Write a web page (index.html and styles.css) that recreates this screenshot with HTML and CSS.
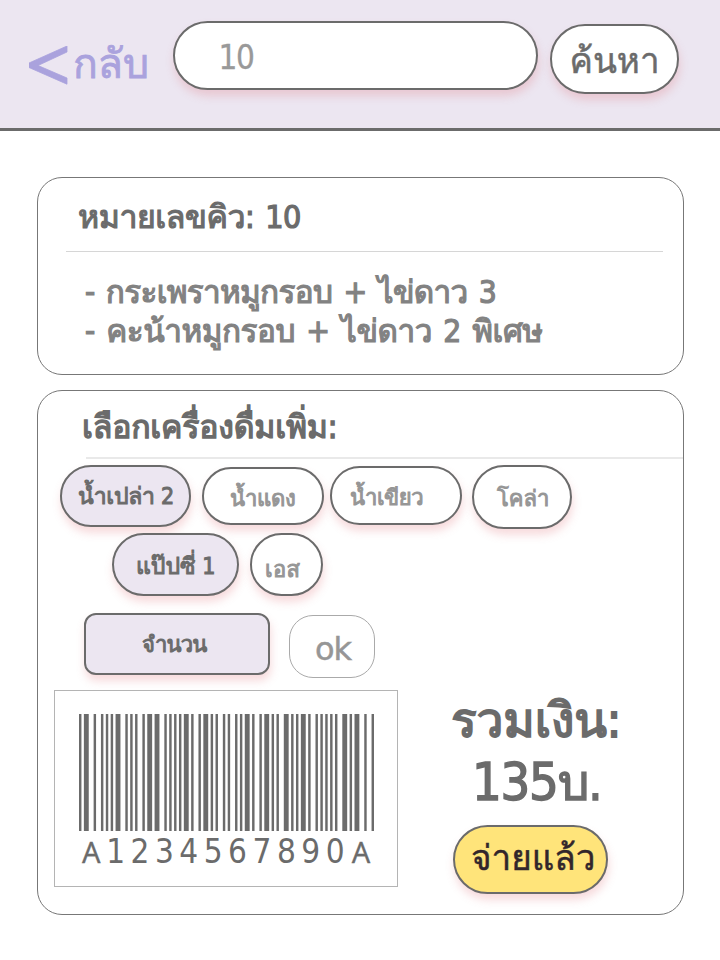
FILE: index.html
```
<!DOCTYPE html>
<html lang="th">
<head>
<meta charset="utf-8">
<title>ชำระเงิน</title>
<link rel="stylesheet" href="styles.css">
</head>
<body>
<header class="topbar">
  <a class="back"><svg class="chevron" width="39" height="39" viewBox="0 0 39 39"><path d="M38 0v6L9 19.500 38 32v6.200L0 21.500v-4.500z"/></svg><span class="t back-label">กลับ</span></a>
  <div class="search"><span class="t">10</span></div>
  <div class="find"><span class="t">ค้นหา</span></div>
</header>
<main class="content">
  <section class="card order">
    <h2 class="t order-title">หมายเลขคิว: 10</h2>
    <ul class="items">
      <li class="t item-a">- กระเพราหมูกรอบ + ไข่ดาว 3</li>
      <li class="t item-b">- คะน้าหมูกรอบ + ไข่ดาว 2 พิเศษ</li>
    </ul>
  </section>
  <section class="card drinks">
    <h2 class="t drinks-title">เลือกเครื่องดื่มเพิ่ม:</h2>
    <div class="chips">
      <div class="chip on water"><span class="t">น้ำเปล่า 2</span></div>
      <div class="chip red"><span class="t">น้ำแดง</span></div>
      <div class="chip green"><span class="t">น้ำเขียว</span></div>
      <div class="chip cola"><span class="t">โคล่า</span></div>
    </div>
    <div class="chips second">
      <div class="chip on pepsi"><span class="t">แป๊ปซี่ 1</span></div>
      <div class="chip es"><span class="t">เอส</span></div>
    </div>
    <div class="amount">
      <div class="qty"><span class="t">จำนวน</span></div>
      <div class="ok"><span class="t">ok</span></div>
    </div>
    <div class="checkout">
      <div class="barcode">
        <svg class="bars" width="295" height="117" viewBox="0 0 121 117" preserveAspectRatio="none"><path d="M0 0h1v117h-1zM2 0h2v117h-2zM6 0h1v117h-1zM9 0h1v117h-1zM11 0h1v117h-1zM13 0h1v117h-1zM15 0h2v117h-2zM19 0h1v117h-1zM21 0h1v117h-1zM23 0h1v117h-1zM26 0h1v117h-1zM28 0h2v117h-2zM31 0h2v117h-2zM35 0h1v117h-1zM37 0h1v117h-1zM39 0h1v117h-1zM41 0h1v117h-1zM43 0h2v117h-2zM46 0h1v117h-1zM49 0h1v117h-1zM51 0h2v117h-2zM54 0h1v117h-1zM56 0h1v117h-1zM59 0h1v117h-1zM61 0h1v117h-1zM64 0h1v117h-1zM66 0h1v117h-1zM68 0h2v117h-2zM71 0h1v117h-1zM74 0h1v117h-1zM76 0h2v117h-2zM79 0h1v117h-1zM81 0h1v117h-1zM84 0h2v117h-2zM87 0h1v117h-1zM89 0h1v117h-1zM91 0h2v117h-2zM94 0h1v117h-1zM97 0h1v117h-1zM99 0h1v117h-1zM101 0h1v117h-1zM103 0h1v117h-1zM105 0h1v117h-1zM108 0h2v117h-2zM111 0h1v117h-1zM113 0h2v117h-2zM117 0h1v117h-1zM120 0h1v117h-1z"/></svg>
        <div class="code"><span class="cap">A</span><span>1</span><span>2</span><span>3</span><span>4</span><span>5</span><span>6</span><span>7</span><span>8</span><span>9</span><span>0</span><span class="cap">A</span></div>
      </div>
      <div class="total">
        <div class="t sum-label">รวมเงิน:</div>
        <div class="t sum">135<span class="unit">บ.</span></div>
        <div class="paid"><span class="t">จ่ายแล้ว</span></div>
      </div>
    </div>
  </section>
</main>
</body>
</html>
```
FILE: styles.css
```
* { box-sizing: border-box; margin: 0; padding: 0; }
body { width: 720px; height: 960px; background: #fff; color: #6b6b6b; font-family: "DejaVu Sans Condensed", Tahoma, Waree, Loma, Garuda, Umpush, "Noto Sans Thai Looped", "Noto Looped Thai", FreeSans, FreeSerif, Norasi, sans-serif; overflow: hidden; }
.t { display: block; white-space: nowrap; font-weight: 400; }
.topbar { height: 131px; background: #ece6f1; border-bottom: 3px solid #6b6b6b; display: flex; align-items: flex-start; padding-left: 29px; }
.back { display: flex; width: 143.500px; padding-top: 46px; color: #aaa2dd; }
.chevron { fill: #aaa2dd; stroke: #aaa2dd; stroke-width: .8px; margin-right: 5px; flex: none; }
.back-label { font-size: 41px; line-height: 36px; -webkit-text-stroke: .8px; }
.search, .find, .paid, .chip, .qty { border: 2px solid #6b6b6b; background: #fff; box-shadow: 1px 6px 8px rgba(225, 110, 120, .25); }
.search { width: 365px; height: 69px; margin-top: 21px; border-radius: 35px; padding-left: 44px; font-size: 33px; letter-spacing: -1.500px; line-height: 70px; color: #999; -webkit-text-stroke: .3px; }
.find { width: 129px; height: 70px; margin: 24px 0 0 12px; border-radius: 35px; padding-left: 18px; font-size: 35px; line-height: 71px; -webkit-text-stroke: .5px; }
.content { display: flex; flex-direction: column; gap: 15px; padding: 46px 36px 0 37px; }
.card { border: 1px solid #777; border-radius: 25px; }
.order { height: 198px; padding: 0 20px 0 28px; }
.order-title { height: 74px; border-bottom: 1px solid #d6d6d6; padding-left: 12px; line-height: 78px; font-size: 32px; letter-spacing: -.4px; word-spacing: 2px; -webkit-text-stroke: 1.200px; }
.items { list-style: none; padding: 21px 0 0 19px; color: #828282; font-size: 31.500px; line-height: 39px; word-spacing: 3px; -webkit-text-stroke: 1.200px; }
.item-a { letter-spacing: -.7px; }
.item-b { letter-spacing: -.5px; }
.drinks { height: 525px; }
.drinks-title { height: 68px; margin-left: 48px; border-bottom: 2px solid #e9e9e9; line-height: 73px; text-indent: -4px; font-size: 32px; letter-spacing: -.2px; -webkit-text-stroke: 1.400px; }
.chips { display: flex; align-items: flex-start; height: 68px; padding: 6px 0 0 22px; font-size: 22px; color: #969696; -webkit-text-stroke: 1px; }
.chip { height: 62px; line-height: 59px; border-radius: 32px; }
.on { background: #ece6f1; color: #6b6b6b; font-size: 23px; }
.water { width: 131px; padding-left: 16px; letter-spacing: -.3px; }
.red { width: 122px; height: 58px; margin: 2px 0 0 11px; padding-left: 26px; letter-spacing: -.3px; }
.green { width: 132px; height: 59px; margin: 1px 0 0 6px; padding-left: 18px; letter-spacing: -.4px; }
.cola { width: 100px; height: 64px; margin-left: 10px; padding-left: 23px; line-height: 64px; }
.second { padding-left: 74px; height: 80px; }
.pepsi { width: 127px; height: 63px; padding-left: 22px; line-height: 62px; }
.es { width: 73px; height: 63px; margin-left: 11px; padding-left: 13px; line-height: 69px; letter-spacing: .4px; }
.amount { display: flex; padding-left: 46px; height: 83px; padding-top: 6px; }
.qty { width: 186px; height: 62px; border-radius: 12px; background: #ece6f1; padding-left: 56px; line-height: 60px; font-size: 22px; letter-spacing: -.8px; -webkit-text-stroke: 1px; }
.ok { width: 86px; height: 63px; margin: 2px 0 0 19px; border: 1px solid #aaa; border-radius: 24px; padding-left: 25px; line-height: 67px; font-family: "DejaVu Sans", sans-serif; font-size: 32px; letter-spacing: -1px; color: #969696; -webkit-text-stroke: .5px; }
.checkout { display: flex; padding-left: 16px; }
.barcode { width: 344px; height: 197px; border: 1px solid #b4b4b4; padding: 23px 0 0 24px; }
.bars { display: block; fill: #6b6b6b; }
.code { display: flex; width: 296px; font-size: 33px; line-height: 42px; }
.code span { width: 24.400px; text-align: center; }
.code .cap { font-family: "Noto Sans", sans-serif; font-size: 29px; line-height: 42px; -webkit-text-stroke: .3px; }
.code .cap:last-child { margin-left: 1.500px; }
.total { padding-left: 53px; }
.sum-label { font-size: 48px; line-height: 60px; letter-spacing: -.2px; -webkit-text-stroke: 1.800px; }
.sum { font-size: 52px; line-height: 62px; height: 64px; padding: 1px 0 1px 21px; letter-spacing: -1.200px; -webkit-text-stroke: 1.400px; }
.unit { font-size: 50px; }
.paid { width: 155px; height: 69px; margin: 11px 0 0 2px; border-radius: 35px; background: #ffe47a; color: #32262b; padding-left: 16px; line-height: 63px; font-size: 35px; -webkit-text-stroke: .5px; }
```
